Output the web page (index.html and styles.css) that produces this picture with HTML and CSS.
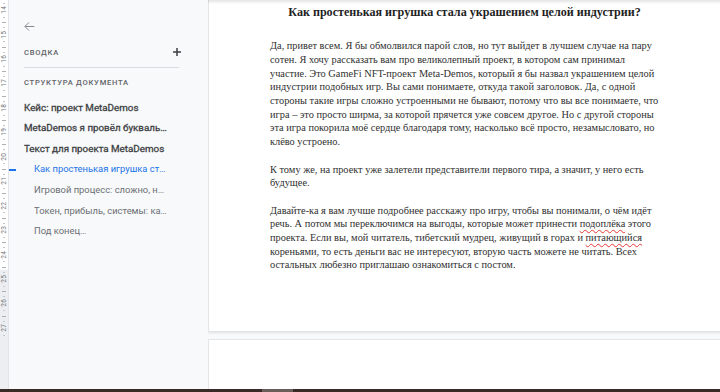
FILE: index.html
```html
<!DOCTYPE html>
<html lang="ru">
<head>
<meta charset="utf-8">
<title>Документ</title>
<link rel="stylesheet" href="styles.css">
</head>
<body>
<div class="app">
  <div class="workspace">
    <div class="ruler">
      <div class="ruler-cells">
        <div class="cm"><span>14</span></div>
        <div class="cm"><span>15</span></div>
        <div class="cm"><span>16</span></div>
        <div class="cm"><span>17</span></div>
        <div class="cm"><span>18</span></div>
        <div class="cm"><span>19</span></div>
        <div class="cm"><span>20</span></div>
        <div class="cm"><span>21</span></div>
        <div class="cm"><span>22</span></div>
        <div class="cm"><span>23</span></div>
        <div class="cm"><span>24</span></div>
        <div class="cm"><span>25</span></div>
        <div class="cm"><span>26</span></div>
        <div class="cm"><span>27</span></div>
      </div>
    </div>
    <aside class="sidebar">
      <div class="back">
        <svg width="13" height="13" viewBox="0 0 24 24"><path d="M21 12H4M11 4.5L3.5 12l7.5 7.5" fill="none" stroke="#80868b" stroke-width="1.8"/></svg>
      </div>
      <div class="section-head">
        <span class="label">Сводка</span>
        <svg class="plus" width="8" height="8" viewBox="0 0 8 8"><path d="M4 0v8M0 4h8" stroke="#3c4043" stroke-width="1.5"/></svg>
      </div>
      <div class="divider"></div>
      <div class="section-title label">Структура документа</div>
      <ul class="outline">
        <li class="lvl1"><span class="txt">Кейс: проект MetaDemos</span></li>
        <li class="lvl1"><span class="txt">MetaDemos я провёл буквально несколько недель</span></li>
        <li class="lvl1"><span class="txt">Текст для проекта MetaDemos</span></li>
        <li class="lvl2 active"><span class="txt">Как простенькая игрушка стала украшением целой индустрии?</span></li>
        <li class="lvl2"><span class="txt">Игровой процесс: сложно, но интересно</span></li>
        <li class="lvl2"><span class="txt">Токен, прибыль, системы: как это работает</span></li>
        <li class="lvl2"><span class="txt">Под конец…</span></li>
      </ul>
    </aside>
    <main class="canvas">
      <div class="topshade"></div>
      <section class="page page-first">
        <h1 class="doc-title">Как простенькая игрушка стала украшением целой индустрии?</h1>
        <p class="para">Да, привет всем. Я бы обмолвился парой слов, но тут выйдет в лучшем случае на пару сотен. Я хочу рассказать вам про великолепный проект, в котором сам принимал участие. Это GameFi NFT-проект Meta-Demos, который я бы назвал украшением целой индустрии подобных игр. Вы сами понимаете, откуда такой заголовок. Да, с одной стороны такие игры сложно устроенными не бывают, потому что вы все понимаете, что игра – это просто ширма, за которой прячется уже совсем другое. Но с другой стороны эта игра покорила моё сердце благодаря тому, насколько всё просто, незамысловато, но клёво устроено.</p>
        <p class="para">К тому же, на проект уже залетели представители первого тира, а значит, у него есть будущее.</p>
        <p class="para">Давайте-ка я вам лучше подробнее расскажу про игру, чтобы вы понимали, о чём идёт речь. А потом мы переключимся на выгоды, которые может принести <span class="typo">подоплёка</span> этого проекта. Если вы, мой читатель, тибетский мудрец, живущий в горах и <span class="typo">питающийся</span> кореньями, то есть деньги вас не интересуют, вторую часть можете не читать. Всех остальных любезно приглашаю ознакомиться с постом.</p>
      </section>
      <section class="page page-next"></section>
    </main>
  </div>
  <div class="taskbar"><span class="task-item"></span></div>
</div>
</body>
</html>
```

FILE: styles.css
```css
* { box-sizing: border-box; }

html, body {
  margin: 0;
  padding: 0;
  width: 720px;
  height: 392px;
  overflow: hidden;
  background: #f8f9fa;
  font-family: Roboto, "Noto Sans", Arial, sans-serif;
}

.app {
  display: flex;
  flex-direction: column;
  height: 392px;
}

.workspace {
  flex: 1;
  display: flex;
  min-height: 0;
  overflow: hidden;
}

/* vertical ruler */
.ruler {
  width: 9px;
  flex: none;
  overflow: hidden;
  border-right: 1px solid #e1e3e6;
  background: linear-gradient(to bottom, #ffffff 0, #ffffff 270px, #eceef1 270px);
}

.ruler-cells {
  display: flex;
  flex-direction: column;
  margin-top: -2.2px;
}

.cm {
  height: 24.45px;
  flex: none;
  display: flex;
  align-items: center;
  justify-content: center;
  background:
    linear-gradient(#aab0b6, #aab0b6) no-repeat 2px 0 / 4px 1px,
    linear-gradient(#c4c8cc, #c4c8cc) no-repeat 3px 5px / 2px 1px,
    linear-gradient(#c4c8cc, #c4c8cc) no-repeat 3px 19px / 2px 1px;
}

.cm span {
  writing-mode: vertical-rl;
  transform: rotate(180deg);
  font-size: 6.5px;
  line-height: 8px;
  color: #6f747a;
  letter-spacing: 0.2px;
}

/* sidebar */
.sidebar {
  width: 199px;
  flex: none;
  padding: 20px 0 0 15px;
  color: #3c4043;
}

.back {
  height: 13px;
  display: flex;
  align-items: center;
}

.back svg { display: block; margin-left: -1px; }

.label {
  font-size: 7.6px;
  font-weight: 500;
  letter-spacing: 0.75px;
  text-transform: uppercase;
  color: #5f6368;
}

.section-head {
  margin-top: 11px;
  height: 16px;
  width: 157px;
  display: flex;
  align-items: center;
  justify-content: space-between;
}

.plus { display: block; }

.divider {
  margin-top: 7px;
  width: 155px;
  border-top: 1px solid #dadce0;
}

.section-title {
  margin-top: 9px;
  line-height: 12px;
  height: 12px;
}

.outline {
  list-style: none;
  margin: 8.5px 0 0 0;
  padding: 0;
  width: 144px;
}

.outline li {
  position: relative;
  height: 20.65px;
  font-size: 9.8px;
}

.outline .txt {
  display: block;
  line-height: 20.65px;
  white-space: nowrap;
  overflow: hidden;
  text-overflow: ellipsis;
}

.outline .lvl1 {
  font-weight: 400;
  color: #3c4043;
  -webkit-text-stroke: 0.3px #3c4043;
}

.outline .lvl2 {
  padding-left: 10px;
  font-size: 9.4px;
  color: #6b6f74;
}

.outline .active {
  color: #1a73e8;
}

.outline .active::before {
  content: "";
  position: absolute;
  left: -15px;
  top: 10px;
  width: 7px;
  height: 1.5px;
  background: #1a73e8;
}

/* document canvas */
.canvas {
  flex: 1;
  min-width: 0;
  position: relative;
  overflow: hidden;
}

.topshade {
  position: absolute;
  left: 0;
  right: 0;
  top: 0;
  height: 4px;
  background: linear-gradient(to bottom, rgba(60, 64, 67, 0.14), rgba(60, 64, 67, 0));
  z-index: 2;
}

.page {
  width: 513px;
  background: #ffffff;
  border: 1px solid #e4e5e7;
  box-shadow: 0 1px 2px rgba(60, 64, 67, 0.12);
}

.page-first {
  height: 332px;
  border-top: none;
  padding: 4px 61px 0 61px;
}

.page-next {
  margin-top: 7px;
  height: 60px;
}

.doc-title {
  margin: 0;
  font-family: "Liberation Serif", "Times New Roman", serif;
  font-weight: bold;
  font-size: 12.1px;
  line-height: 16px;
  text-align: center;
  color: #1f1f1f;
}

.para {
  margin: 0 0 13.7px 0;
  font-family: "Liberation Serif", "Times New Roman", serif;
  font-size: 10.35px;
  line-height: 13.7px;
  color: #303030;
}

.doc-title + .para { margin-top: 19.2px; }

.typo {
  text-decoration: underline wavy #e53935;
  text-decoration-thickness: 1px;
  text-underline-offset: 2px;
}

/* bottom strip */
.taskbar {
  height: 3px;
  flex: none;
  background: #3a2a25;
  display: flex;
}

.task-item {
  margin-left: 262px;
  width: 31px;
  background: #6a5e5a;
}
```
